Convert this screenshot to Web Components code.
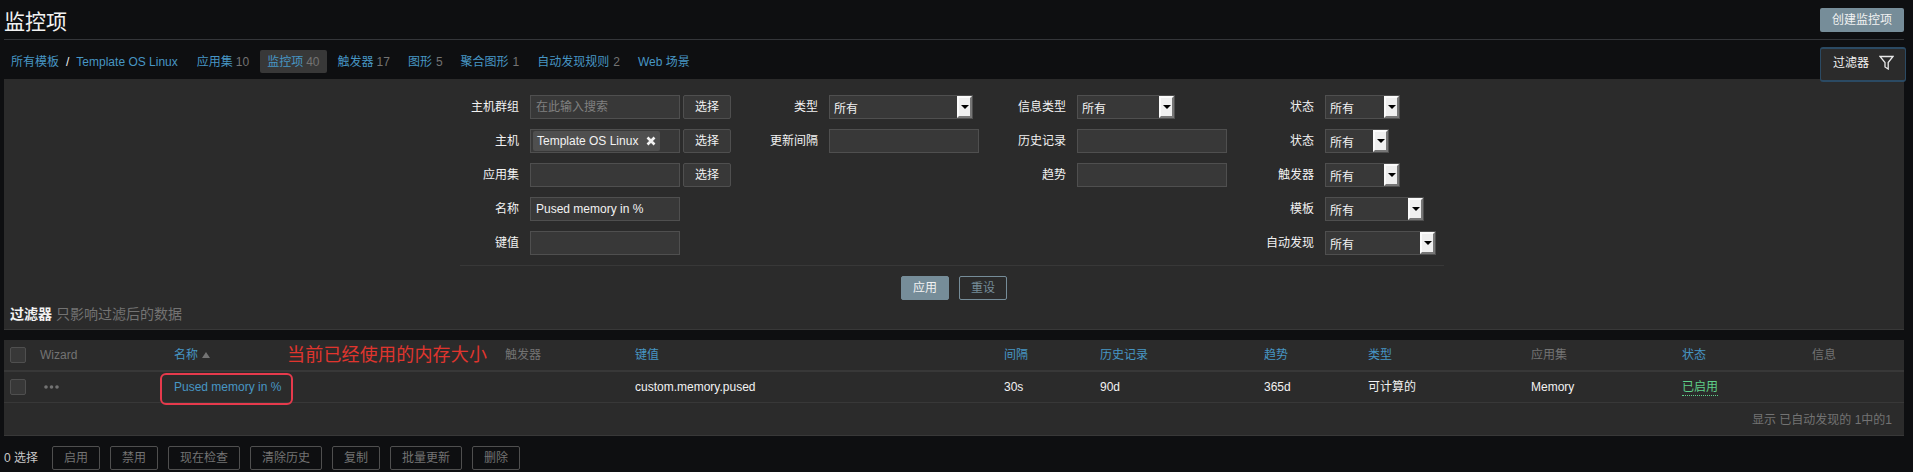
<!DOCTYPE html>
<html lang="zh"><head><meta charset="utf-8"><title>监控项</title>
<style>
html,body{margin:0;background:#0e0f11}
body{font:12px/14px "Liberation Sans","Noto Sans CJK SC",sans-serif;color:#f2f2f2;height:472px;overflow:hidden}
</style></head><body>
<z-page>
  <z-header slot="header" title-text="监控项" action="创建监控项"></z-header>
  <z-nav slot="nav">
    <z-crumb>所有模板</z-crumb><z-sep>/</z-sep><z-crumb>Template OS Linux</z-crumb>
    <z-tab first count="10">应用集</z-tab>
    <z-tab active count="40">监控项</z-tab>
    <z-tab count="17">触发器</z-tab>
    <z-tab single count="5">图形</z-tab>
    <z-tab single count="1">聚合图形</z-tab>
    <z-tab single count="2">自动发现规则</z-tab>
    <z-tab>Web 场景</z-tab>
    <z-filter-tab slot="over">过滤器</z-filter-tab>
  </z-nav>
  <z-filter slot="filter">
    <z-col style="--w:282px;--lw:59px" slot="form">
      <z-field label="主机群组"><z-input placeholder="在此输入搜索"></z-input><z-btn>选择</z-btn></z-field>
      <z-field label="主机"><z-input><z-chip>Template OS Linux</z-chip></z-input><z-btn>选择</z-btn></z-field>
      <z-field label="应用集"><z-input></z-input><z-btn>选择</z-btn></z-field>
      <z-field label="名称"><z-input value="Pused memory in %"></z-input></z-field>
      <z-field label="键值"><z-input></z-input></z-field>
    </z-col>
    <z-col style="--w:248px;--lw:76px" slot="form">
      <z-field label="类型"><z-select w="144"></z-select></z-field>
      <z-field label="更新间隔"><z-input></z-input></z-field>
    </z-col>
    <z-col style="--w:248px;--lw:76px" slot="form">
      <z-field label="信息类型"><z-select w="98"></z-select></z-field>
      <z-field label="历史记录"><z-input></z-input></z-field>
      <z-field label="趋势"><z-input></z-input></z-field>
    </z-col>
    <z-col style="--w:209px;--lw:76px" slot="form">
      <z-field label="状态"><z-select w="75"></z-select></z-field>
      <z-field label="状态"><z-select w="64"></z-select></z-field>
      <z-field label="触发器"><z-select w="75"></z-select></z-field>
      <z-field label="模板"><z-select w="99"></z-select></z-field>
      <z-field label="自动发现"><z-select w="111"></z-select></z-field>
    </z-col>
  </z-filter>
  <z-table slot="table"></z-table>
  <z-actions slot="actions" label="0 选择" items="启用,禁用,现在检查,清除历史,复制,批量更新,删除"></z-actions>
</z-page>
<script>
function def(name, css, html, extra){
  customElements.define(name, class extends HTMLElement{
    connectedCallback(){
      if(this.shadowRoot) return;
      const s=this.attachShadow({mode:'open'});
      const h=typeof html==='function'?html(this):html;
      s.innerHTML='<style>'+css+'</style>'+h;
      if(extra) extra(this,s);
    }
  });
}
def('z-page',':host{display:block;padding:0 9px 0 4px}::slotted([slot=table]){margin-top:10px}',
  '<slot name="header"></slot><slot name="nav"></slot><slot name="filter"></slot><slot name="table"></slot><slot name="actions"></slot>');
def('z-header',`:host{display:flex;justify-content:space-between;align-items:flex-start;height:39px;border-bottom:1px solid #34363a;box-sizing:content-box}
  h1{margin:9px 0 0;font:400 21px/26px "Liberation Sans","Noto Sans CJK SC",sans-serif;color:#f2f2f2}
  button{all:unset;box-sizing:border-box;margin-top:8px;width:84px;height:24px;background:#768d99;color:#f2f2f2;border-radius:2px;text-align:center;font:12px/24px "Liberation Sans","Noto Sans CJK SC",sans-serif}`,
  e=>`<h1>${e.getAttribute('title-text')}</h1><button>${e.getAttribute('action')}</button>`);
def('z-nav',`:host{display:flex;position:relative;align-items:center;height:39px;padding-left:7px;box-sizing:border-box;padding-top:4px}
  ::slotted([slot=over]){position:absolute;right:-2px;top:7px}`,'<slot></slot><slot name="over"></slot>');
def('z-crumb',':host{display:block;color:#4796c4;white-space:nowrap}:host{padding:0}','<slot></slot>');
def('z-sep',':host{display:block;padding:0 7px 0 7px;color:#f2f2f2}','<slot></slot>');
def('z-tab',`:host{display:flex;gap:3px;height:23px;align-items:center;padding:0 7px 0 7px;margin-left:4px;white-space:nowrap;color:#4796c4;border-radius:2px}
  :host([first]){margin-left:12px}
  :host([single]){gap:4px}
  :host([active]){background:#383838}
  i{font-style:normal;color:#737373}`,
  e=>`<span><slot></slot></span>${e.hasAttribute('count')?`<i>${e.getAttribute('count')}</i>`:''}`);
def('z-filter-tab',`:host{display:flex;align-items:flex-start;box-sizing:border-box;width:86px;height:35px;padding:7px 0 0 12px;gap:10px;background:#2b2b2b;border:1px solid #2b4a63;border-width:2px 1px 2px 1px;border-radius:3px;color:#f2f2f2;z-index:2}
  svg{display:block;margin-top:-1px}`,
  `<slot></slot><svg width="15" height="15" viewBox="0 0 15 15" fill="none" stroke="#e8e8e8" stroke-width="1.3"><path d="M1 1.5H14L9.2 7.5V14L6 12V7.5Z"/></svg>`);
def('z-filter',`:host{display:block;height:251px;box-sizing:border-box;background:#2b2b2b;border-bottom:1px solid #383838;padding-top:16px}
  .form{display:flex;width:987px;margin:0 0 0 456px;height:160px}
  .line{width:984px;margin:10px 0 0 456px;border-top:1px solid #383838}
  .go{display:flex;justify-content:center;gap:10px;margin-top:10px}
  .note{margin:6px 0 0 6px;font-size:14px;line-height:16px;color:#737373}
  b{font-weight:700;color:#f2f2f2}`,
  `<div class="form"><slot name="form"></slot></div><div class="line"></div>
   <div class="go"><z-btn main>应用</z-btn><z-btn outline>重设</z-btn></div>
   <div class="note"><b>过滤器</b> 只影响过滤后的数据</div>`);
def('z-col',':host{display:flex;flex-direction:column;gap:10px;width:var(--w);flex:none}','<slot></slot>');
def('z-field',`:host{display:flex;height:24px;align-items:center;gap:11px}
  label{width:var(--lw);flex:none;text-align:right;color:#f2f2f2;white-space:nowrap}
  .c{display:flex;gap:3px}`,
  e=>`<label>${e.getAttribute('label')}</label><div class="c"><slot></slot></div>`);
def('z-input',`:host{display:flex;align-items:center;box-sizing:border-box;width:150px;height:24px;padding:0 2px;background:#383838;border:1px solid #4f4f4f;color:#f2f2f2;white-space:nowrap}
  span{padding-left:3px}.p{color:#808080}`,
  e=>{const p=e.getAttribute('placeholder'),v=e.getAttribute('value');
    return (p?`<span class="p">${p}</span>`:'')+(v?`<span>${v}</span>`:'')+'<slot></slot>';});
def('z-chip',`:host{display:flex;align-items:center;gap:8px;height:20px;padding:0 4px;background:#4f4f4f;border-radius:2px;color:#f2f2f2;white-space:nowrap;margin-left:0}
  svg{display:block}`,
  `<slot></slot><svg width="10" height="10" viewBox="0 0 10 10" stroke="#f2f2f2" stroke-width="2.6"><path d="M1.5 1.5L8.5 8.5M8.5 1.5L1.5 8.5"/></svg>`);
def('z-btn',`:host{display:block;box-sizing:border-box;width:48px;height:24px;text-align:center;line-height:22px;background:#383838;border:1px solid #4f4f4f;border-radius:2px;color:#f2f2f2;flex:none}
  :host([main]){background:#768d99;border-color:#768d99}
  :host([outline]){background:transparent;border-color:#768d99;color:#768d99}`,'<slot></slot>');
def('z-select',`:host{display:flex;box-sizing:border-box;height:24px;background:#383838;border:1px solid #4f4f4f;color:#f2f2f2}
  span{flex:1;padding:4px 0 0 4px;line-height:18px}
  i{display:flex;align-items:center;justify-content:center;box-sizing:border-box;width:15px;height:22px;background:#efefef;border:2px solid;border-color:#fbfbfb #767676 #767676 #fbfbfb}
  i::before{content:"";border:4px solid transparent;border-top:4px solid #000;border-bottom:0}`,
  e=>{e.style.width=e.getAttribute('w')+'px';return '<span>所有</span><i></i>';});
def('z-check',':host{display:block;box-sizing:border-box;width:16px;height:16px;background:#383838;border:1px solid #4f4f4f;border-radius:2px}','');
def('z-cell',`:host{display:block;white-space:nowrap;color:#f2f2f2}
  :host([kind=link]){color:#4796c4}
  :host([kind=muted]){color:#737373}
  :host([kind=on]) span{color:#5fd08a;border-bottom:1px dotted #5fd08a;padding-bottom:1px}
  .sort{display:inline-block;margin-left:4px;border:4px solid transparent;border-bottom:6px solid #737373;border-top:0;vertical-align:1px}`,
  e=>`<span><slot></slot></span>${e.hasAttribute('sorted')?'<i class="sort"></i>':''}`);
def('z-row',`:host{display:grid;align-items:center;padding-left:6px;
    grid-template-columns:30px 134px 331px 130px 369px 96px 164px 104px 163px 151px 130px 1fr}
  :host([head]){height:32px;border-bottom:2px solid #383838;box-sizing:border-box}
  :host([body]){height:31px;border-bottom:1px solid #383838;box-sizing:border-box}`,'<slot></slot>');
def('z-table',`:host{display:block;position:relative;height:96px;background:#2b2b2b;border-bottom:1px solid #383838;box-sizing:border-box}
  .foot{text-align:right;padding:10px 12px 0 0;color:#737373}
  .note{position:absolute;left:283px;top:3px;font-size:18px;line-height:24px;letter-spacing:.2px;color:#e0352e;white-space:nowrap}
  .mark{position:absolute;left:156px;top:33px;width:133px;height:32px;box-sizing:border-box;border:2.5px solid #e63a4c;border-radius:6px}
  svg{display:block}`,
  `<z-row head><z-check></z-check><z-cell kind="muted">Wizard</z-cell><z-cell kind="link" sorted>名称</z-cell><z-cell kind="muted">触发器</z-cell><z-cell kind="link">键值</z-cell><z-cell kind="link">间隔</z-cell><z-cell kind="link">历史记录</z-cell><z-cell kind="link">趋势</z-cell><z-cell kind="link">类型</z-cell><z-cell kind="muted">应用集</z-cell><z-cell kind="link">状态</z-cell><z-cell kind="muted">信息</z-cell></z-row>
   <z-row body><z-check></z-check><svg width="20" height="6" viewBox="0 0 20 6" fill="#737373"><circle cx="6" cy="3" r="1.8"/><circle cx="11.5" cy="3" r="1.8"/><circle cx="17" cy="3" r="1.8"/></svg><z-cell kind="link">Pused memory in %</z-cell><z-cell></z-cell><z-cell>custom.memory.pused</z-cell><z-cell>30s</z-cell><z-cell>90d</z-cell><z-cell>365d</z-cell><z-cell>可计算的</z-cell><z-cell>Memory</z-cell><z-cell kind="on">已启用</z-cell><z-cell></z-cell></z-row>
   <div class="foot">显示 已自动发现的 1中的1</div>
   <div class="note">当前已经使用的内存大小</div><div class="mark"></div>`);
def('z-actions',`:host{display:flex;align-items:center;height:44px;gap:10px;color:#c8c8c8}
  span{margin-right:4px}
  .w{width:72px}`,
  e=>`<span>${e.getAttribute('label')}</span>`+e.getAttribute('items').split(',').map(t=>`<z-btn class="${t.length>2?'w':''}" style="background:transparent;color:#737373">${t}</z-btn>`).join(''));
</script>
</body></html>
